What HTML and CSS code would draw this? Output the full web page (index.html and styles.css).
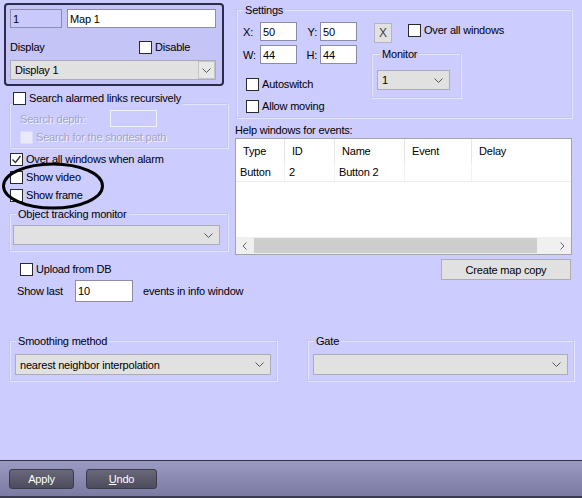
FILE: index.html
```html
<!DOCTYPE html>
<html lang="en">
<head>
    <meta charset="UTF-8">
    <title>Map settings</title>
    <link rel="stylesheet" href="styles.css">
</head>
<body>
<div class="page">
    <div class="main">
        <div class="top">
            <!-- left column -->
            <div class="col-left">
                <div class="panel">
                    <div class="name-row">
                        <input class="field id-field" value="1">
                        <input class="field name-field" value="Map 1">
                    </div>
                    <div class="display-row">
                        <span>Display</span>
                        <label class="check"><span class="cb"></span>Disable</label>
                    </div>
                    <div class="select display-select">
                        <span>Display 1</span>
                        <span class="drop-btn"><svg width="9" height="5" viewBox="0 0 9 5"><path d="M0.5 0.5 L4.5 4.5 L8.5 0.5" fill="none" stroke="#555" stroke-width="1"/></svg></span>
                    </div>
                </div>

                <label class="check search-head"><span class="cb"></span>Search alarmed links recursively</label>
                <div class="group search-group">
                    <div class="depth-row">
                        <span class="disabled-text depth-label">Search depth:</span>
                        <span class="field depth-field"></span>
                    </div>
                    <label class="check shortest"><span class="cb cb-disabled"></span><span class="disabled-text">Search for the shortest path</span></label>
                </div>

                <label class="check alarm-check"><span class="cb"><svg width="11" height="11" viewBox="0 0 11 11"><path d="M1.5 5.5 L4.5 8.5 L9.5 2" fill="none" stroke="#333" stroke-width="1.4"/></svg></span>Over all windows when alarm</label>
                <label class="check side-check"><span class="cb"></span>Show video</label>
                <label class="check side-check"><span class="cb"></span>Show frame</label>

                <div class="group tracking-group">
                    <div class="group-title">Object tracking monitor</div>
                    <div class="select tracking-select">
                        <span></span>
                        <svg width="9" height="5" viewBox="0 0 9 5"><path d="M0.5 0.5 L4.5 4.5 L8.5 0.5" fill="none" stroke="#555" stroke-width="1"/></svg>
                    </div>
                </div>

                <label class="check upload-check"><span class="cb"></span>Upload from DB</label>
                <div class="show-last">
                    <span class="show-label">Show last</span>
                    <input class="field last-field" value="10">
                    <span class="events-label">events in info window</span>
                </div>
            </div>

            <!-- right column -->
            <div class="col-right">
                <div class="group settings">
                    <div class="group-title">Settings</div>
                    <div class="settings-body">
                        <div class="settings-left">
                            <div class="coords">
                                <span class="coord-label">X:</span>
                                <input class="field coord-field" value="50">
                                <span class="coord-label right">Y:</span>
                                <input class="field coord-field" value="50">
                                <span class="coord-label">W:</span>
                                <input class="field coord-field" value="44">
                                <span class="coord-label right">H:</span>
                                <input class="field coord-field" value="44">
                            </div>
                            <label class="check autoswitch"><span class="cb"></span>Autoswitch</label>
                            <label class="check moving"><span class="cb"></span>Allow moving</label>
                        </div>
                        <div class="settings-right">
                            <div class="x-row">
                                <button class="x-btn">X</button>
                                <label class="check over-all"><span class="cb"></span>Over all windows</label>
                            </div>
                            <div class="group monitor-group">
                                <div class="group-title">Monitor</div>
                                <div class="select monitor-select">
                                    <span>1</span>
                                    <svg width="9" height="5" viewBox="0 0 9 5"><path d="M0.5 0.5 L4.5 4.5 L8.5 0.5" fill="none" stroke="#555" stroke-width="1"/></svg>
                                </div>
                            </div>
                        </div>
                    </div>
                </div>

                <div class="help-label">Help windows for events:</div>
                <div class="list">
                    <div class="list-row list-head">
                        <span>Type</span><span>ID</span><span>Name</span><span>Event</span><span>Delay</span>
                    </div>
                    <div class="list-row list-item">
                        <span>Button</span><span>2</span><span>Button 2</span><span></span><span></span>
                    </div>
                    <div class="scrollbar">
                        <span class="scroll-btn"><svg width="5" height="8" viewBox="0 0 5 8"><path d="M4.5 0.5 L1 4 L4.5 7.5" fill="none" stroke="#666" stroke-width="1"/></svg></span>
                        <span class="scroll-thumb"></span>
                        <span class="scroll-btn"><svg width="5" height="8" viewBox="0 0 5 8"><path d="M0.5 0.5 L4 4 L0.5 7.5" fill="none" stroke="#666" stroke-width="1"/></svg></span>
                    </div>
                </div>
                <button class="btn copy-btn">Create map copy</button>
            </div>
        </div>

        <div class="bottom-groups">
            <div class="group smoothing-group">
                <div class="group-title">Smoothing method</div>
                <div class="select wide-select">
                    <span>nearest neighbor interpolation</span>
                    <svg width="9" height="5" viewBox="0 0 9 5"><path d="M0.5 0.5 L4.5 4.5 L8.5 0.5" fill="none" stroke="#555" stroke-width="1"/></svg>
                </div>
            </div>
            <div class="group gate-group">
                <div class="group-title">Gate</div>
                <div class="select wide-select">
                    <span></span>
                    <svg width="9" height="5" viewBox="0 0 9 5"><path d="M0.5 0.5 L4.5 4.5 L8.5 0.5" fill="none" stroke="#555" stroke-width="1"/></svg>
                </div>
            </div>
        </div>
    </div>

    <div class="footer">
        <button class="dark-btn apply-btn">Apply</button>
        <button class="dark-btn undo-btn"><u>U</u>ndo</button>
    </div>

    <!-- hand-drawn highlight -->
    <svg class="highlight" width="106" height="52" viewBox="0 0 106 52">
        <ellipse cx="52" cy="25" rx="49.5" ry="22" fill="none" stroke="#000" stroke-width="3"/>
    </svg>
</div>
</body>
</html>
```

FILE: styles.css
```css
* {
    box-sizing: border-box;
}

body {
    margin: 0;
    width: 582px;
    height: 498px;
    overflow: hidden;
    background: #ccccff;
    font-family: "Liberation Sans", Arial, sans-serif;
    font-size: 11px;
    letter-spacing: -0.2px;
    line-height: 14px;
    color: #000;
}

.page {
    position: relative;
    display: flex;
    flex-direction: column;
    height: 498px;
}

.main {
    flex: 1;
}

.top {
    display: grid;
    grid-template-columns: 224px 337px;
    column-gap: 7px;
    padding-left: 4px;
}

/* common controls */
.field {
    display: block;
    height: 19px;
    border: 1px solid #8c8ca8;
    background: #fff;
    padding: 0 2px;
    font: inherit;
    letter-spacing: inherit;
    color: #000;
    outline: none;
}

.check {
    display: flex;
    align-items: center;
    height: 14px;
    white-space: nowrap;
}

.cb {
    display: inline-flex;
    align-items: center;
    justify-content: center;
    width: 13px;
    height: 13px;
    border: 1px solid #2a2a2a;
    background: #fff;
    margin-right: 3px;
    flex-shrink: 0;
}

.cb-disabled {
    border-color: #dcdcf2;
    background: #e9e9f9;
}

.disabled-text {
    color: #a4a4c4;
    text-shadow: 1px 1px 0 #f4f4ff;
}

.select {
    display: flex;
    align-items: center;
    justify-content: space-between;
    height: 20px;
    border: 1px solid #acacb8;
    background: #e1e1e1;
    padding: 0 6px 0 4px;
}

.group {
    border: 1px solid #c6c6ec;
    box-shadow: inset 1px 1px 0 #e4e4ff, 1px 1px 0 #e4e4ff;
}

.group-title {
    position: relative;
    width: fit-content;
    margin-top: -7px;
    padding: 0 2px;
    background: #ccccff;
    line-height: 14px;
}

/* top-left panel */
.panel {
    margin-top: 3px;
    width: 220px;
    border: 2px solid #2c2c4a;
    border-radius: 4px;
    background: #c4c4f6;
    padding: 4px 6px 4px 4px;
}

.name-row {
    display: flex;
    gap: 5px;
}

.id-field {
    width: 52px;
    background: #c9c9fb;
}

.name-field {
    width: 149px;
}

.display-row {
    display: grid;
    grid-template-columns: 129px auto;
    align-items: center;
    height: 13px;
    margin-top: 12px;
}

.display-select {
    width: 206px;
    margin-top: 7px;
    padding-right: 0;
}

.drop-btn {
    display: flex;
    align-items: center;
    justify-content: center;
    width: 17px;
    height: 18px;
    border: 1px solid #c4c4c4;
    background: #e8e8e8;
}

/* search group */
.search-head {
    position: relative;
    width: fit-content;
    margin: 5px 0 0 9px;
    padding-right: 2px;
    background: #ccccff;
}

.search-group {
    width: 219px;
    margin: -2px 0 0 5px;
    padding: 6px 0 3px 10px;
}

.depth-row {
    display: flex;
    align-items: center;
    height: 17px;
}

.depth-label {
    width: 90px;
}

.depth-field {
    width: 47px;
    height: 17px;
    background: #ccccff;
    border-color: #f2f2ff;
}

.shortest {
    margin-top: 3px;
}

.alarm-check {
    margin: 4px 0 0 6px;
}

.side-check {
    margin: 4px 0 0 6px;
}

.tracking-group {
    width: 219px;
    margin: 11px 0 0 5px;
    padding: 0 6px 5px 3px;
}

.tracking-group .group-title {
    margin-left: 3px;
    margin-bottom: 4px;
}

.tracking-select {
    width: 207px;
}

.upload-check {
    margin: 11px 0 0 16px;
}

.show-last {
    display: flex;
    align-items: center;
    margin: 4px 0 0 13px;
    white-space: nowrap;
}

.show-last > * {
    flex-shrink: 0;
}

.show-label {
    width: 58px;
}

.last-field {
    width: 58px;
    height: 22px;
}

.events-label {
    margin-left: 10px;
}

/* right column */
.col-right {
    display: flex;
    flex-direction: column;
}

.settings {
    width: 336px;
    margin: 9px 0 0 1px;
    padding: 0 0 4px 6px;
}

.settings .group-title {
    margin-bottom: 5px;
}

.settings-body {
    display: flex;
}

.settings-left {
    width: 114px;
}

.coords {
    display: grid;
    grid-template-columns: 17px 37px 23px 37px;
    grid-auto-rows: 19px;
    row-gap: 4px;
    align-items: center;
}

.coord-label.right {
    text-align: right;
    padding-right: 3px;
}

.coord-field {
    width: 37px;
}

.autoswitch {
    margin: 13px 0 0 3px;
}

.moving {
    margin: 8px 0 0 3px;
}

.settings-right {
    margin-left: 14px;
}

.x-row {
    display: flex;
    align-items: flex-start;
}

.x-btn {
    width: 18px;
    height: 20px;
    margin: 1px 0 0 3px;
    padding: 0;
    border: 1px solid #b4b4bc;
    background: #e1e1e1;
    font-family: "Liberation Sans", Arial, sans-serif;
    font-size: 12px;
    color: #444;
}

.over-all {
    margin: 1px 0 0 16px;
}

.monitor-group {
    width: 90px;
    margin-top: 10px;
    padding: 0 10px 7px 5px;
}

.monitor-group .group-title {
    margin-left: 3px;
    margin-bottom: 9px;
}

.monitor-select {
    width: 73px;
}

.help-label {
    margin-top: 5px;
}

.list {
    display: flex;
    flex-direction: column;
    height: 117px;
    margin-top: 1px;
    border: 1px solid #a4a4a4;
    background: #fff;
}

.list-row {
    display: grid;
    grid-template-columns: 49px 50px 70px 67px 1fr;
}

.list-head {
    height: 24px;
}

.list-head span {
    padding-left: 7px;
    line-height: 24px;
    border-right: 1px solid #e6e6e6;
}

.list-item {
    height: 19px;
    border-bottom: 1px solid #ececec;
}

.list-item span {
    padding-left: 4px;
    line-height: 18px;
    border-right: 1px solid #f2f2f2;
}

.list-row span:last-child {
    border-right: none;
}

.scrollbar {
    display: flex;
    align-items: center;
    height: 17px;
    margin-top: auto;
    background: #f0f0f0;
}

.scroll-btn {
    display: flex;
    align-items: center;
    justify-content: center;
    width: 17px;
    height: 17px;
}

.scroll-thumb {
    width: 283px;
    height: 15px;
    margin: 0 17px 0 1px;
    background: #cdcdcd;
}

.btn {
    border: 1px solid #adadad;
    background: #e1e1e1;
    font-family: inherit;
    font-size: 11px;
    letter-spacing: inherit;
    color: #000;
    padding: 0;
}

.copy-btn {
    align-self: flex-end;
    width: 130px;
    height: 21px;
    margin: 4px 1px 0 0;
}

/* bottom group row */
.bottom-groups {
    display: flex;
    gap: 30px;
    margin-top: 38px;
    padding-left: 9px;
}

.smoothing-group,
.gate-group {
    padding: 0 5px 5px 5px;
}

.smoothing-group {
    width: 268px;
}

.gate-group {
    width: 267px;
}

.bottom-groups .group-title {
    margin-left: 1px;
    margin-bottom: 6px;
}

.wide-select {
    height: 21px;
}

/* footer bar */
.footer {
    display: flex;
    height: 38px;
    padding: 8px 0 0 9px;
    border-top: 1px solid #2e2e48;
    border-bottom: 2px solid #3a3a52;
    background: linear-gradient(#9a9ac2, #7a7aa2);
}

.dark-btn {
    height: 20px;
    padding: 0;
    border: 1px solid #3a3a48;
    border-radius: 3px;
    background: linear-gradient(#68687a, #4c4c5c);
    color: #fff;
    font-family: "Liberation Sans", Arial, sans-serif;
    font-size: 11px;
    letter-spacing: -0.2px;
}

.apply-btn {
    width: 65px;
}

.undo-btn {
    width: 71px;
    margin-left: 12px;
}

.highlight {
    position: absolute;
    left: 1px;
    top: 161px;
    pointer-events: none;
}
```
